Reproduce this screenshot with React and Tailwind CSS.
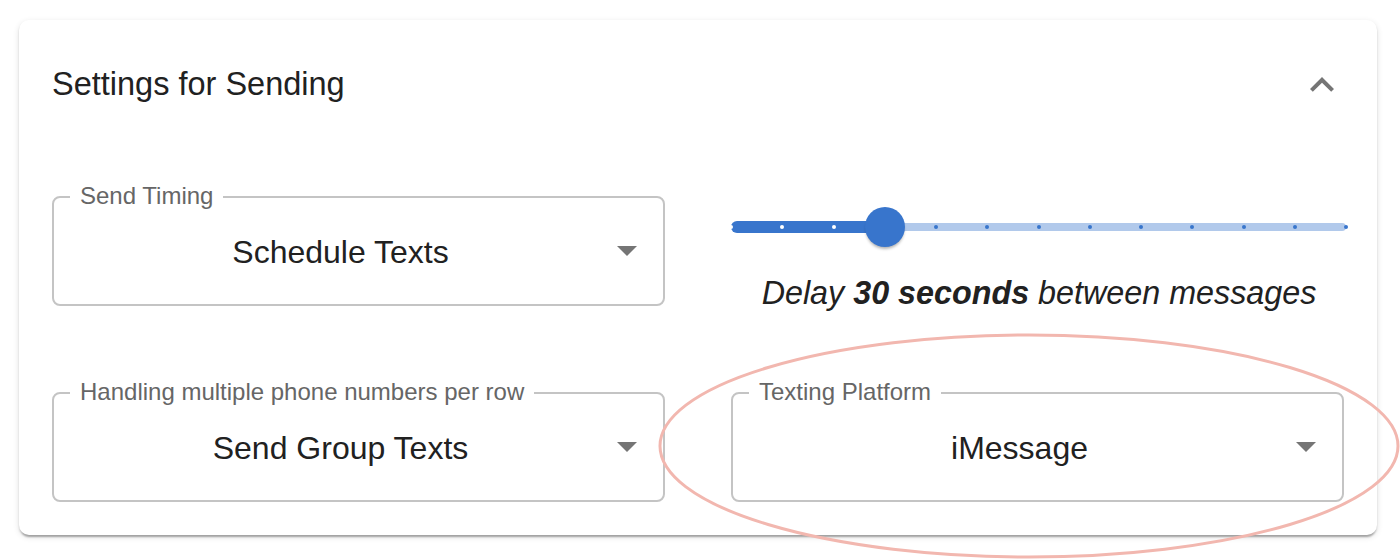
import React from "react";

const marks = Array.from({ length: 13 }, (_, i) => i);

const SelectBox = ({ label, value }) => {
  return (
    <div className="relative h-[110px] rounded-[8px] border-2 border-[#c4c4c4] flex items-center pl-[28px] pr-[64px]">
      <span className="absolute left-[16px] top-[-16px] bg-white px-[10px] text-[24px] leading-[28px] text-[#666666]">
        {label}
      </span>
      <span className="flex-1 mt-[2px] text-center text-[32px] leading-[38px] text-[#212121]">
        {value}
      </span>
      <svg
        viewBox="0 0 24 24"
        className="absolute right-[12px] top-[28px] w-[48px] h-[48px] fill-[#757575]"
      >
        <path d="M7 10l5 5 5-5z" />
      </svg>
    </div>
  );
};

const DelaySlider = ({ step }) => {
  const pct = (step / 12) * 100;
  return (
    <div className="relative h-[60px] w-[615px]">
      <div className="absolute left-0 right-0 top-[27px] h-[8px] rounded-full bg-[#b1c9eb]" />
      <div
        className="absolute left-0 top-[25px] h-[12px] rounded-full bg-[#3875cc]"
        style={{ width: pct + "%" }}
      />
      {marks.map((m) => (
        <span
          key={m}
          className={
            "absolute top-[29px] h-[4px] w-[4px] -ml-[2px] rounded-full " +
            (m <= step ? "bg-white" : "bg-[#3875cc]")
          }
          style={{ left: (m / 12) * 100 + "%" }}
        />
      ))}
      <span
        className="absolute top-[11px] h-[40px] w-[40px] -ml-[20px] rounded-full bg-[#3875cc] shadow-[0_3px_3px_-1px_rgba(0,0,0,0.3)]"
        style={{ left: pct + "%" }}
      />
    </div>
  );
};

const App = () => {
  return (
    <div
      className="relative w-[1400px] h-[560px] bg-white overflow-hidden"
      style={{ fontFamily: '"Liberation Sans", Arial, sans-serif' }}
    >
      <div className="ml-[19px] mt-[20px] w-[1358px] rounded-[10px] bg-white px-[33px] pb-[33px] shadow-[0_4px_2px_-2px_rgba(0,0,0,0.2),0_2px_2px_0_rgba(0,0,0,0.14),0_2px_6px_0_rgba(0,0,0,0.12)]">
        <div className="h-[128px] flex items-center justify-between">
          <h2 className="text-[32.5px] leading-[38px] text-[#212121]">
            Settings for Sending
          </h2>
          <svg viewBox="0 0 24 24" className="w-[48px] h-[48px] mr-[-2px] mt-[1px] fill-[#757575]">
            <path d="M12 8l-6 6 1.41 1.41L12 10.83l4.59 4.58L18 14z" />
          </svg>
        </div>

        <div className="pt-[48px] grid grid-cols-2 gap-x-[66px] gap-y-[86px]">
          <SelectBox label="Send Timing" value="Schedule Texts" />
          <div className="h-[110px] flex flex-col items-center">
            <div className="self-start">
              <DelaySlider step={3} />
            </div>
            <p className="mt-[23px] text-[32.3px] leading-[28px] italic text-[#212121] pl-[3px]">
              Delay <b>30 seconds</b> between messages
            </p>
          </div>
          <SelectBox
            label="Handling multiple phone numbers per row"
            value="Send Group Texts"
          />
          <SelectBox label="Texting Platform" value="iMessage" />
        </div>
      </div>

      <svg className="absolute left-0 top-0 w-[1400px] h-[560px] pointer-events-none" viewBox="0 0 1400 560">
        <ellipse cx="1029" cy="446" rx="369" ry="111" fill="none" stroke="#f2b7af" strokeWidth="3" />
      </svg>
    </div>
  );
};

export default App;
